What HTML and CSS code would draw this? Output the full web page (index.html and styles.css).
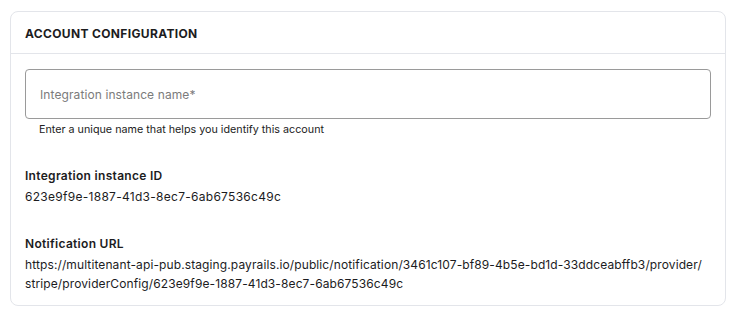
FILE: index.html
```html
<!DOCTYPE html>
<html>
<head>
<meta charset="utf-8">
<link rel="stylesheet" href="styles.css">
</head>
<body>
<section class="card">
  <header class="card-header">ACCOUNT CONFIGURATION</header>
  <div class="card-body">
    <div class="field">
      <div class="input"><span class="placeholder">Integration instance name*</span></div>
      <div class="helper">Enter a unique name that helps you identify this account</div>
    </div>
    <div class="info">
      <div class="label">Integration instance ID</div>
      <div class="value">623e9f9e-1887-41d3-8ec7-6ab67536c49c</div>
    </div>
    <div class="info">
      <div class="label">Notification URL</div>
      <div class="value url"><span class="nowrap">https://multitenant-api-pub.staging.payrails.io/public/notification/3461c107-bf89-4b5e-bd1d-33ddceabffb3/provider/</span><wbr><span class="nowrap">stripe/providerConfig/623e9f9e-1887-41d3-8ec7-6ab67536c49c</span></div>
    </div>
  </div>
</section>
</body>
</html>
```
FILE: styles.css
```css
* { box-sizing: border-box; }
body {
  margin: 0;
  padding: 11px 12px 0 10px;
  background: #ffffff;
  font-family: Inter, "Noto Sans", sans-serif;
  color: #1c1c1e;
}
.card {
  border: 1px solid #e3e5ea;
  border-radius: 8px;
  height: 295px;
}
.card-header {
  height: 42px;
  padding: 2px 14px 0;
  display: flex;
  align-items: center;
  font-size: 12px;
  font-weight: 700;
  letter-spacing: 0.35px;
  border-bottom: 1px solid #e3e5ea;
}
.card-body {
  padding: 15px 14px 0 14px;
  display: flex;
  flex-direction: column;
}
.input {
  height: 50px;
  border: 1px solid #9a9a9a;
  border-radius: 4px;
  display: flex;
  align-items: center;
  padding: 0 14px;
}
.placeholder {
  font-size: 12px;
  letter-spacing: 0.1px;
  color: #7b7b7b;
}
.helper {
  font-size: 10.75px;
  color: #222;
  padding: 4px 0 0 14px;
  line-height: 14px;
}
.info { margin-top: 29px; }
.field + .info { margin-top: 30px; }
.label {
  font-size: 12px;
  font-weight: 600;
  letter-spacing: 0.3px;
  line-height: 18px;
}
.value {
  font-size: 12px;
  letter-spacing: 0.28px;
  line-height: 19px;
  margin-top: 2px;
}
.url { letter-spacing: 0.11px; }
.nowrap { white-space: nowrap; }
```
